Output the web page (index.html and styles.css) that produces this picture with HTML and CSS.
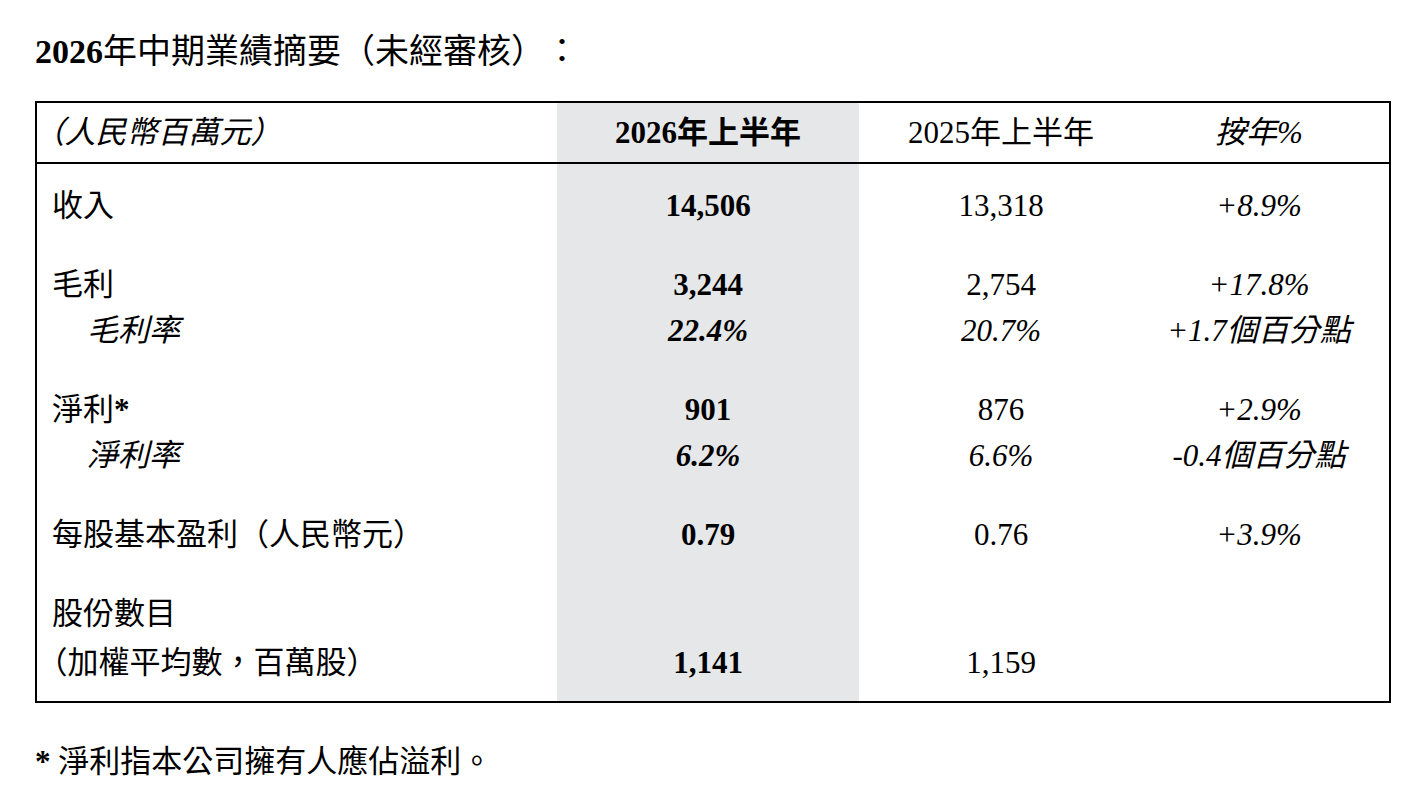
FILE: index.html
```html
<!DOCTYPE html>
<html lang="zh-Hant">
<head>
<meta charset="utf-8">
<title>2026年中期業績摘要</title>
<link rel="stylesheet" href="styles.css">
</head>
<body>
<div class="page">
  <h1 class="title"><b>2026</b>年中期業績摘要（未經審核）：</h1>
  <table class="summary">
    <colgroup>
      <col class="c1"><col class="c2"><col class="c3"><col class="c4">
    </colgroup>
    <thead>
      <tr>
        <th class="label it trim">（人民幣百萬元）</th>
        <th class="cur"><b>2026</b><span class="cjkb">年上半年</span></th>
        <th>2025年上半年</th>
        <th class="yoy it">按年%</th>
      </tr>
    </thead>
    <tbody>
      <tr class="grp first">
        <td class="label">收入</td>
        <td class="cur"><b>14,506</b></td>
        <td>13,318</td>
        <td class="yoy it">+8.9%</td>
      </tr>
      <tr class="grp">
        <td class="label">毛利</td>
        <td class="cur"><b>3,244</b></td>
        <td>2,754</td>
        <td class="yoy it">+17.8%</td>
      </tr>
      <tr class="sub">
        <td class="label indent it">毛利率</td>
        <td class="cur it"><b>22.4%</b></td>
        <td class="it">20.7%</td>
        <td class="yoy it">+1.7個百分點</td>
      </tr>
      <tr class="grp">
        <td class="label">淨利<b>*</b></td>
        <td class="cur"><b>901</b></td>
        <td>876</td>
        <td class="yoy it">+2.9%</td>
      </tr>
      <tr class="sub">
        <td class="label indent it">淨利率</td>
        <td class="cur it"><b>6.2%</b></td>
        <td class="it">6.6%</td>
        <td class="yoy it">-0.4個百分點</td>
      </tr>
      <tr class="grp">
        <td class="label">每股基本盈利（人民幣元）</td>
        <td class="cur"><b>0.79</b></td>
        <td>0.76</td>
        <td class="yoy it">+3.9%</td>
      </tr>
      <tr class="grp">
        <td class="label">股份數目</td>
        <td class="cur"></td>
        <td></td>
        <td class="yoy"></td>
      </tr>
      <tr class="sub last">
        <td class="label trim">（加權平均數，百萬股）</td>
        <td class="cur"><b>1,141</b></td>
        <td>1,159</td>
        <td class="yoy"></td>
      </tr>
    </tbody>
  </table>
  <p class="note"><b>*</b> 淨利指本公司擁有人應佔溢利。</p>
</div>
</body>
</html>
```

FILE: styles.css
```css
html, body {
  margin: 0;
  padding: 0;
  background: #ffffff;
}

body {
  font-family: "Liberation Serif", "Noto Sans CJK TC", serif;
  color: #000000;
  text-spacing-trim: space-all;
}

.page {
  padding: 32px 33px 0 35px;
}

.title {
  margin: 0;
  font-size: 34px;
  line-height: 40px;
  font-weight: 400;
}

.title b {
  font-weight: 700;
}

.summary {
  margin-top: 29px;
  width: 1354px;
  table-layout: fixed;
  border-collapse: collapse;
  border: 2px solid #000000;
  font-size: 31px;
  line-height: 46px;
}

.c1 { width: 521px; }
.c2 { width: 302px; }
.c3 { width: 284px; }
.c4 { width: 247px; }

.summary th,
.summary td {
  padding: 0;
  text-align: center;
  font-weight: 400;
  white-space: nowrap;
}

.summary thead th {
  padding-top: 7px;
  padding-bottom: 6px;
  border-bottom: 2px solid #000000;
}

.summary .label {
  text-align: left;
  padding-left: 15px;
}

.summary thead .label {
  padding-left: 12px;
}

.summary .trim {
  text-spacing-trim: trim-start;
}

.summary .indent {
  padding-left: 50px;
}

.summary .yoy {
  padding-right: 14px;
}

.summary .cur {
  background: #e6e7e9;
}

.summary b {
  font-weight: 700;
}

.cjkb {
  font-weight: 700;
}

.it {
  font-style: italic;
}

.summary tr.grp td {
  padding-top: 33px;
}

.summary tr.grp.first td {
  padding-top: 19px;
}

.summary tr.last td {
  padding-top: 3px;
  padding-bottom: 15px;
}

.note {
  margin: 36px 0 0 0;
  font-size: 31px;
  line-height: 46px;
}
```
